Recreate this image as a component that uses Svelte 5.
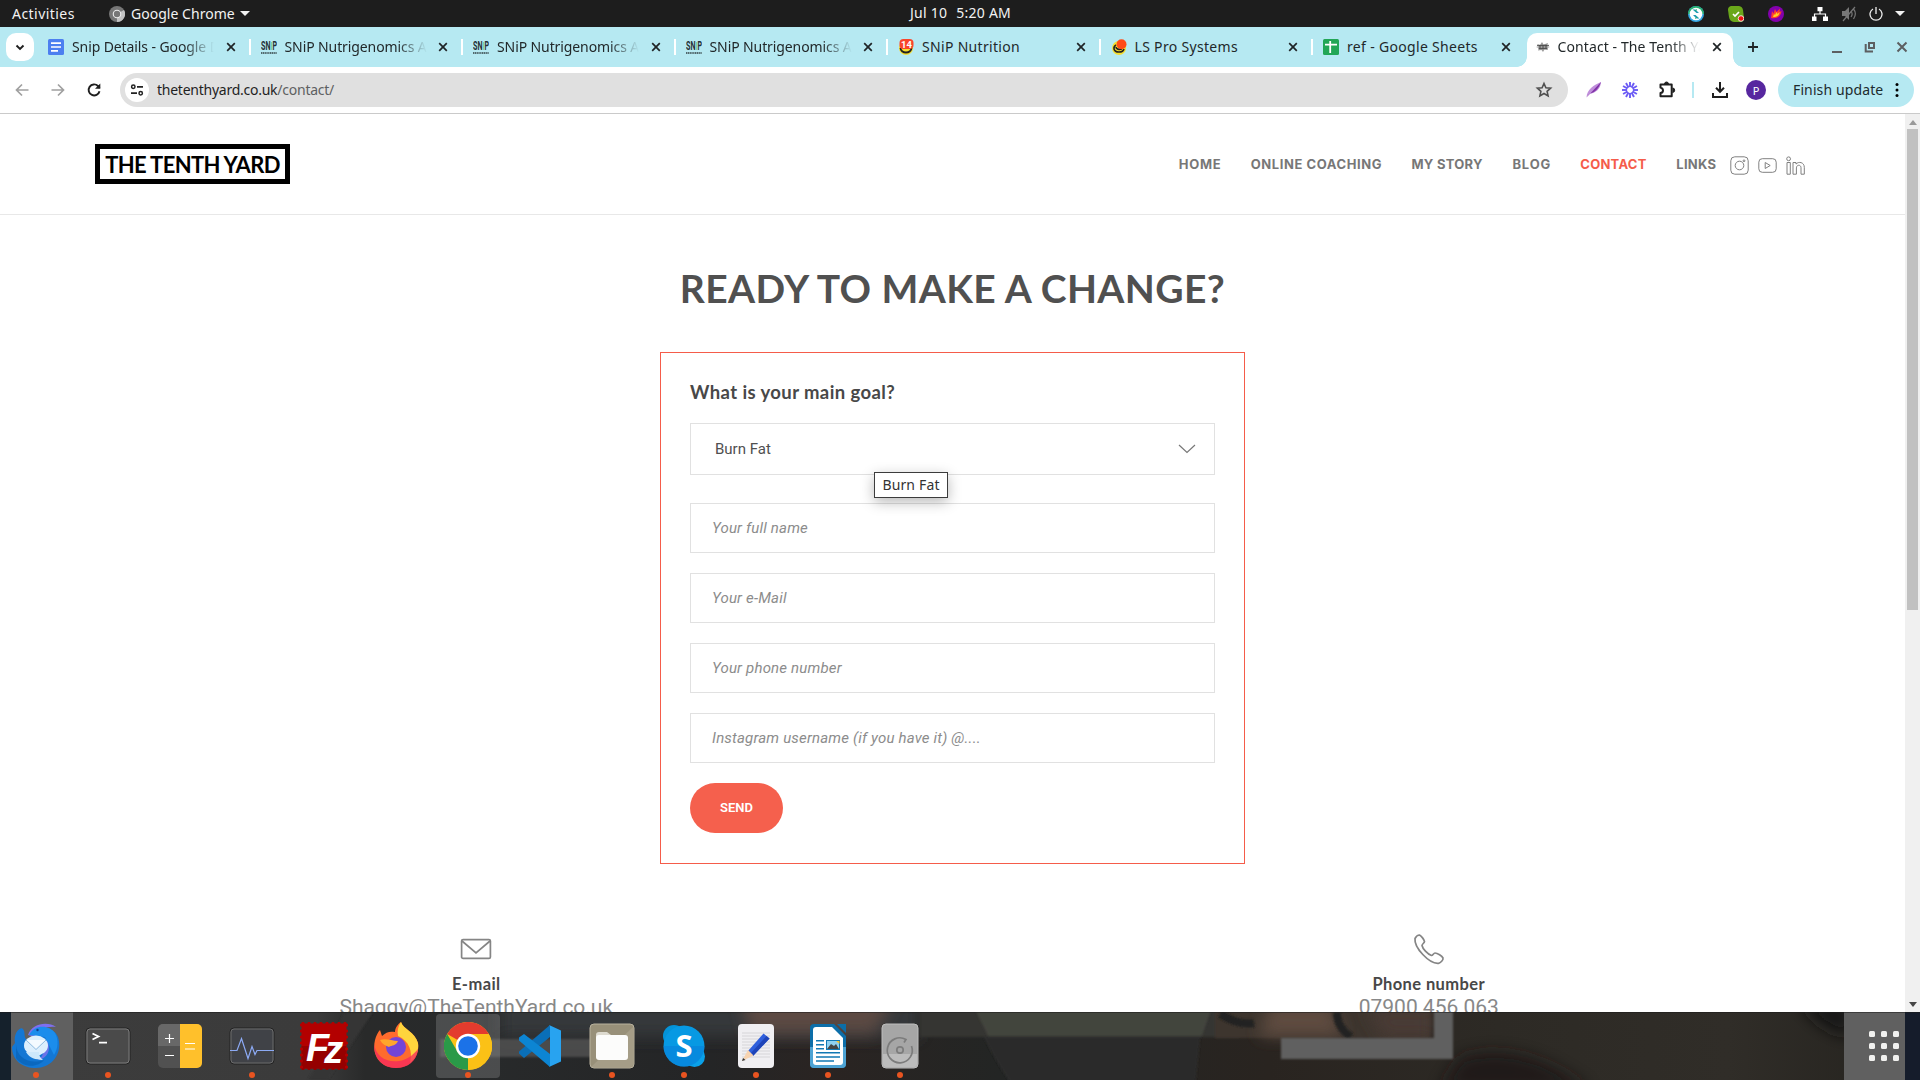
<script lang="ts">
  const tabs = [
    { icon: 'docs', title: 'Snip Details - Google Docs', sep: true },
    { icon: 'snip', title: 'SNiP Nutrigenomics Admin', sep: true },
    { icon: 'snip', title: 'SNiP Nutrigenomics Admin', sep: true },
    { icon: 'snip', title: 'SNiP Nutrigenomics Admin', sep: true },
    { icon: 'badge', title: 'SNiP Nutrition', sep: true, loose: true },
    { icon: 'dot', title: 'LS Pro Systems', sep: true, loose: true },
    { icon: 'sheets', title: 'ref - Google Sheets', sep: false, loose: true },
    { icon: 'yard', title: 'Contact - The Tenth Yard', sep: false, active: true }
  ];
  const nav = ['Home', 'Online coaching', 'My story', 'Blog', 'Contact', 'Links'];
  const fields = ['Your full name', 'Your e-Mail', 'Your phone number', 'Instagram username (if you have it) @....'];
  const apps = [
    { id: 'mail', run: true },
    { id: 'terminal', run: true },
    { id: 'calc', run: false },
    { id: 'monitor', run: true },
    { id: 'filezilla', run: false },
    { id: 'firefox', run: false },
    { id: 'chrome', run: true, active: true },
    { id: 'code', run: false },
    { id: 'files', run: true },
    { id: 'skype', run: true },
    { id: 'editor', run: true },
    { id: 'writer', run: true },
    { id: 'disks', run: true }
  ];
  const rays = Array.from({ length: 12 }, (_, i) => i * 30);
  const teeth = Array.from({ length: 8 }, (_, i) => 3 + i * 6);
</script>

{#snippet favicon(kind: string)}
  <svg class="fav" viewBox="0 0 16 16">
    {#if kind === 'docs'}
      <rect width="16" height="16" rx="1.5" fill="#4c7ff0" />
      <path d="M3 4.2h10M3 8h10M3 11.8h7" stroke="#fff" stroke-width="1.7" />
    {:else if kind === 'snip'}
      <text x="0" y="11" class="sn" textLength="9.5" lengthAdjust="spacingAndGlyphs">SN</text>
      <path d="M10.500 3v8" stroke="#7fd0a8" stroke-width="1.400" />
      <text x="11.500" y="11" class="sn" textLength="4.5" lengthAdjust="spacingAndGlyphs">P</text>
      <path d="M0 14h16" stroke="#3a4a4e" stroke-width="2" stroke-dasharray="1.3 .5" opacity=".8" />
    {:else if kind === 'badge'}
      <circle cx="8" cy="9" r="7" fill="#f5de2e" />
      <path d="M2.500 9a5.500 4.500 0 0 0 11 0" fill="none" stroke="#222" stroke-width="1.800" />
      <rect x="1.500" y="0" width="14" height="10" rx="4" fill="#f9452b" />
      <text x="8.500" y="8.500" class="num">14</text>
    {:else if kind === 'dot'}
      <circle cx="8" cy="9" r="7" fill="#f5de2e" />
      <path d="M5 6a4 4 0 0 0-2 4c1 4 9 4 10 0M5 8c0 2 3 3 6 2" fill="none" stroke="#222" stroke-width="1.6" />
      <circle cx="10.5" cy="5.2" r="5" fill="#ff4b17" />
    {:else if kind === 'sheets'}
      <rect width="16" height="16" rx="1.5" fill="#22a656" />
      <path d="M2 5.600h12M7.200 2v12" stroke="#fff" stroke-width="1.800" />
    {:else}
      <path d="M2 5l3 1 2-3 1.500 2.500L13 4l-1 3 3 1-3 1 1 2-3.500-.5L8 13l-1.500-2L3 11.500 4 9 1 8l3-1z" fill="#9b9b9b" />
      <path d="M2 6.400h12M3.500 9.600h9M5 6.400v3M8 6.400v3M11 6.400v3" stroke="#444" stroke-width=".9" />
    {/if}
  </svg>
{/snippet}

{#snippet appIcon(id: string)}
  <svg class="app" viewBox="0 0 48 48">
    {#if id === 'mail'}
      <path d="M3 21C1 12 8 4 11 7c3 4 0 8 4 11l8-2C30 5 41 4 46 15c5 15-5 31-22 31C10 46 0 38 0 25z" fill="#1377d4" />
      <path d="M16 13C20 1 36-1 44 5c-8-1-17 1-21 10z" fill="#7e6ff0" />
      <path d="M17 13C23 2 37 3 43 11c4 7 3 16-1 22l-9-18z" fill="#1b8dec" />
      <path d="M4 23c1 12 12 20 28 15-5 7-20 9-28-2z" fill="#075fb0" opacity=".6" />
      <path d="M35 19c5 8 0 18-9 19 8-5 6-15 4-19z" fill="#6974e8" />
      <ellipse cx="24" cy="23.500" rx="12" ry="10" fill="#dceffd" />
      <path d="M14 30c4 7 9 7 17 8-3-2-4-5-4-8z" fill="#cde8fb" />
      <path d="M14 18l10 9.500L34 18" fill="#f3faff" stroke="#8fbbe0" stroke-width="1" />
      <circle cx="25.500" cy="8" r="1.200" fill="#133c8c" />
    {:else if id === 'terminal'}
      <rect x="2" y="6" width="44" height="36" rx="4" fill="#4a4a4a" stroke="#232323" />
      <rect x="3" y="7" width="42" height="34" rx="3" fill="none" stroke="#7b7b7b" />
      <path d="M8.500 11.500l6 3-6 3M15 20.700h8" fill="none" stroke="#fff" stroke-width="1.800" />
    {:else if id === 'calc'}
      <rect x="2" y="2" width="44" height="44" rx="5" fill="#515151" />
      <path d="M2 24V7a5 5 0 0 1 5-5h17v22z" fill="#686868" />
      <path d="M24 2h17a5 5 0 0 1 5 5v34a5 5 0 0 1-5 5H24z" fill="#ffc02b" />
      <path d="M9 16.500h9M13.500 12v9M9 33.500h9M29 21.500h10M29 27h10" stroke="#fff" stroke-width="1.200" />
    {:else if id === 'monitor'}
      <rect x="2" y="6" width="44" height="36" rx="4" fill="#404247" stroke="#232323" />
      <rect x="3" y="7" width="42" height="34" rx="3" fill="none" stroke="#6b6b6b" />
      <path d="M2 28.500h7l4.500-12 6.500 20 4-12 3 8 2-4h17" fill="none" stroke="#8caaf5" stroke-width="1.200" />
    {:else if id === 'filezilla'}
      <rect x="1.500" y="1.500" width="45" height="45" fill="#b30000" />
      <path d="M1.500 24h45v22.500h-45z" fill="#950000" />
      {#each teeth as t}
        <circle cx={t} cy="1.500" r="1.600" fill="#b30000" />
        <circle cx={t} cy="46.500" r="1.600" fill="#950000" />
        <circle cx="1.500" cy={t} r="1.600" fill="#b30000" />
        <circle cx="46.500" cy={t} r="1.600" fill="#b30000" />
      {/each}
      <text x="6" y="39" class="fz">F<tspan dx="-5" dy="2">z</tspan></text>
    {:else if id === 'firefox'}
      <path d="M3 18c1-4 3-8 5-10l2 6c4-4 8-5 13-4 0-4 3-8 6-10 2 7 14 10 17 21 2 14-8 25-22 25S-1 35 3 18z" fill="#ff6b2d" />
      <path d="M29 0c2 7 14 10 17 21 1 7-2 15-8 20 3-12-1-22-12-27-1-5 0-10 3-14z" fill="#ffd53d" />
      <path d="M2 22c2 12 12 19 25 17 8-1 14-6 19-12-1 12-10 19-22 19C10 46 2 36 2 22z" fill="#f5265f" opacity=".75" />
      <circle cx="24" cy="25" r="10" fill="#7544d6" />
      <path d="M8 18c6-2 12 1 18 1-2 5-6 4-9 6-3-1-7-3-9-7z" fill="#ffa62b" />
    {:else if id === 'chrome'}
      <circle cx="24" cy="24" r="24" fill="#fbc116" />
      <path d="M24 24L3.200 12A24 24 0 0 1 44.800 12H24z" fill="#e33b2e" />
      <path d="M3.200 12L13.600 30 24 36 24 48A24 24 0 0 1 3.200 12z" fill="#2a9a48" />
      <path d="M34.400 30L24 48A24 24 0 0 0 44.800 12H24z" fill="#fbc116" />
      <circle cx="24" cy="24" r="12.200" fill="#fff" />
      <circle cx="24" cy="24" r="9.800" fill="#1b72e8" />
    {:else if id === 'code'}
      <path d="M34 3v12L8 36l-5-4.500v-2z" fill="#0a6fb8" />
      <path d="M3 18.500v-3L8 12l26 20v13z" fill="#0c85d3" />
      <path d="M33 3l12 5.500v31L33 45c1-.5 1-1.500 1-3V6c0-1.500 0-2.500-1-3z" fill="#28a3f0" />
    {:else if id === 'files'}
      <rect x="2" y="2" width="44" height="44" rx="4" fill="#989079" stroke="#b8b19d" />
      <path d="M3 45L45 5v37a3 3 0 0 1-3 3z" fill="#a59d87" />
      <path d="M8 13a3 3 0 0 1 3-3h8l4 3v8H8z" fill="#dddacf" />
      <rect x="8" y="13" width="32" height="25" rx="3" fill="#fcfcfb" />
    {:else if id === 'skype'}
      <circle cx="14" cy="14" r="11" fill="#0493d8" />
      <circle cx="34.500" cy="34.500" r="10.500" fill="#0aa1e9" />
      <circle cx="24" cy="24" r="20.500" fill="#0799e3" />
      <path d="M3.500 24a20.500 20.500 0 0 0 41 0z" fill="#0783dc" opacity=".65" />
      <text x="24" y="34.500" class="sk">S</text>
    {:else if id === 'editor'}
      <rect x="6" y="2" width="36" height="44" rx="4" fill="#f0eff2" />
      <path d="M10 11h28M10 14h28M10 17h28M10 20h28M10 23h28M10 26h28M10 29h28M10 32h28M10 35h28" stroke="#cfcfd2" stroke-width=".8" />
      <path d="M31.500 11.500l6 5L21 34l-5-5z" fill="#2f5fdc" />
      <path d="M34.500 14l3 2.500L21 34l-2.500-2.500z" fill="#1f44b8" />
      <path d="M16 28l5.500 5.500L10 39z" fill="#f7d3b0" />
      <path d="M11 36l2.500 2L10 39z" fill="#333" />
    {:else if id === 'writer'}
      <path d="M10 2h20l12 12v28a4 4 0 0 1-4 4H10a4 4 0 0 1-4-4V6a4 4 0 0 1 4-4z" fill="#0c6ea9" />
      <path d="M6 25h36v17a4 4 0 0 1-4 4H10a4 4 0 0 1-4-4z" fill="#4da3d4" />
      <path d="M9 8a3 3 0 0 1 3-3h16l11 11v24a3 3 0 0 1-3 3H12a3 3 0 0 1-3-3z" fill="#fff" />
      <path d="M33 2h9v9z" fill="#0c6ea9" />
      <path d="M12 18.700h8M12 22.700h8M12 26.700h8M12 30.700h24M12 35h24M12 39h18" stroke="#1278b4" stroke-width="1.600" />
      <rect x="22.500" y="18.500" width="13" height="9" fill="#8fd0f1" stroke="#1278b4" />
      <path d="M23 27l4-5 3 2 2-2 3 5z" fill="#444" />
      <path d="M32 19h3.500v3z" fill="#f4c430" />
    {:else}
      <rect x="6" y="2" width="36" height="44" rx="4" fill="#a6a6a6" stroke="#bdbdbd" />
      <path d="M7 32h34v10a3 3 0 0 1-3 3H10a3 3 0 0 1-3-3z" fill="#bcbcbc" />
      <path d="M35.500 24a12.500 12.500 0 1 1-5.500-6.500l-2 3" fill="none" stroke="#7c7c7c" stroke-width="1.700" />
      <circle cx="24" cy="28" r="3.200" fill="none" stroke="#7c7c7c" stroke-width="1.700" />
    {/if}
  </svg>
{/snippet}

<div class="screen">
  <header class="topbar">
    <span class="activities">Activities</span>
    <div class="appmenu">
      <svg width="16" height="16" viewBox="0 0 16 16">
        <circle cx="8" cy="8" r="8" fill="#777" />
        <path d="M8 8L15 4a8 8 0 0 1-7 12z" fill="#c2c2c2" />
        <circle cx="8" cy="8" r="4.300" fill="#eee" /><circle cx="8" cy="8" r="3.200" fill="#777" />
      </svg>
      <span class="appname">Google Chrome</span>
      <i class="caret"></i>
    </div>
    <div class="clock"><span>Jul 10</span><span>5:20 AM</span></div>
    <div class="tray">
      <svg class="t1" width="16" height="16" viewBox="0 0 16 16">
        <circle cx="8" cy="8" r="8" fill="#35a7e4" /><path d="M8 0a8 8 0 0 1 8 8H0a8 8 0 0 1 8-8z" fill="#27b071" />
        <circle cx="8" cy="8" r="6.300" fill="#fff" />
        <path d="M4.500 3.500h3L11 7H8.500zM11.500 12.500h-3L5 9h2.500z" fill="#1f9bb6" /><path d="M7 5l2-1.500M9 11l-2 1.500" stroke="#27b071" />
      </svg>
      <svg class="t2" width="16" height="16" viewBox="0 0 16 16">
        <path d="M3 0h8a5 5 0 0 1 4 4l1 8a4 4 0 0 1-4 4H6a6 6 0 0 1-5-5L0 4a4 4 0 0 1 3-4z" fill="#6aa71a" />
        <path d="M5 8l2 2 4-4" fill="none" stroke="#fff" stroke-width="1.700" /><circle cx="13" cy="12.500" r="2.800" fill="#e11" stroke="#fff" stroke-width=".8" />
      </svg>
      <svg class="t3" width="16" height="16" viewBox="0 0 16 16">
        <circle cx="8" cy="8" r="8" fill="#8400ad" />
        <path d="M3 12L4 5l1.500 2.500L7 3l1.500 3L12 2.500l-.5 3.500 2-1c-.5 5-4 8-10.500 7z" fill="#ff3b30" /><path d="M5 11l1-3 1 1 1.500-3 1 2 2-2c0 3-2 5-6.500 5z" fill="#ffd21f" />
      </svg>
      <svg class="t4" width="16" height="14" viewBox="0 0 16 14">
        <path d="M5.500 0h5v4.200h-5zM0 9.500h4.500V14H0zM11 9.500h5V14h-5z" fill="#fff" /><path d="M8 4v3M2.500 10V7h11v3" fill="none" stroke="#fff" stroke-width="1.200" />
      </svg>
      <svg class="t5" width="16" height="16" viewBox="0 0 16 16">
        <path d="M1 5h3l4-4v13l-4-4H1z" fill="#777" /><path d="M10 5c1.500 2 1.500 4 0 6M12.500 3c2.500 3 2 7 0 10M2 15L14 1" stroke="#777" stroke-width="1.200" fill="none" />
      </svg>
      <svg class="t6" width="14" height="14" viewBox="0 0 14 14">
        <path d="M4 2a6 6 0 1 0 6 0M7 0v7" fill="none" stroke="#eee" stroke-width="1.300" />
      </svg>
      <i class="caret"></i>
    </div>
  </header>

  <div class="tabstrip">
    <div class="tabsearch"><svg width="12" height="12" viewBox="0 0 12 12"><path d="M2.500 4.500L6 8l3.500-3.500" fill="none" stroke="#1f1f1f" stroke-width="1.900" /></svg></div>
    {#each tabs as tab}
      <div class="tab" class:active={tab.active} class:sep={tab.sep} class:loose={tab.loose}>
        {@render favicon(tab.icon)}
        <span class="title">{tab.title}</span>
        <svg class="x" width="10" height="10" viewBox="0 0 10 10"><path d="M1.200 1.200l7.600 7.600M8.800 1.200L1.200 8.800" stroke="#1f2426" stroke-width="1.700" /></svg>
      </div>
    {/each}
    <svg class="plus" width="12" height="12" viewBox="0 0 12 12"><path d="M6 1v10M1 6h10" stroke="#1f2426" stroke-width="1.800" /></svg>
    <div class="winctl">
      <svg width="12" height="12" viewBox="0 0 12 12"><path d="M1 11h10" stroke="#5c5f61" stroke-width="2" /></svg>
      <svg width="12" height="12" viewBox="0 0 12 12"><path d="M5 2h5v5H5z" fill="none" stroke="#5c5f61" stroke-width="2" /><path d="M1.700 3v7.500H9" fill="none" stroke="#5c5f61" stroke-width="2" /></svg>
      <svg width="12" height="12" viewBox="0 0 12 12"><path d="M1.500 1.500l9 9M10.500 1.500l-9 9" stroke="#5c5f61" stroke-width="2" /></svg>
    </div>
  </div>

  <div class="toolbar">
    <div class="navbtns">
      <svg width="16" height="16" viewBox="0 0 16 16"><path d="M14.500 8H3M8 2.500L2.500 8 8 13.500" fill="none" stroke="#a0a0a0" stroke-width="1.700" /></svg>
      <svg width="16" height="16" viewBox="0 0 16 16"><path d="M1.500 8H13M8 2.500L13.500 8 8 13.500" fill="none" stroke="#a0a0a0" stroke-width="1.700" /></svg>
      <svg width="16" height="16" viewBox="0 0 16 16"><path d="M13.500 9.200A5.500 5.500 0 1 1 12 4l1.700 1.800" fill="none" stroke="#1f1f1f" stroke-width="1.900" /><path d="M14.300 1.500v5.300H9z" fill="#1f1f1f" /></svg>
    </div>
    <div class="omnibox">
      <div class="site"><svg width="14" height="14" viewBox="0 0 14 14"><circle cx="3.300" cy="3.800" r="1.700" fill="none" stroke="#222" stroke-width="1.500" /><path d="M7 3.800h6M1 10.200h6" stroke="#222" stroke-width="1.700" /><circle cx="10.700" cy="10.200" r="1.700" fill="none" stroke="#222" stroke-width="1.500" /></svg></div>
      <span class="url">thetenthyard.co.uk<em>/contact/</em></span>
      <svg class="star" width="18" height="18" viewBox="0 0 18 18"><path d="M9 2.500l1.900 4.300 4.700.4-3.500 3.100 1 4.600L9 12.500l-4.100 2.400 1-4.600-3.500-3.100 4.700-.4z" fill="none" stroke="#4f4f4f" stroke-width="1.600" /></svg>
    </div>
    <div class="ext">
      <svg class="e1" width="16" height="16" viewBox="0 0 16 16"><path d="M.5 15.500C1 7 8 3 15 0c-.5 7-5 11-12 12z" fill="#c08fdb" /><path d="M.5 15.500L15 0c-3 8-6 10-12 12z" fill="#8133a8" /></svg>
      <svg class="e2" width="16" height="16" viewBox="0 0 16 16">
        {#each rays as r}<path d="M8 0v5" transform="rotate({r} 8 8)" stroke="#6c5cf5" stroke-width="1.900" />{/each}
        <circle cx="8" cy="8" r="3.500" fill="none" stroke="#6c5cf5" stroke-width="1.200" />
      </svg>
      <svg class="e3" width="18" height="18" viewBox="0 0 18 18"><path d="M2.500 3.500h11.200v11.700H2.500V12c1.800-.3 2.500-1.300 2.500-2.600S4.200 7 2.500 6.600z" fill="none" stroke="#1f1f1f" stroke-width="2" stroke-linejoin="round" /><path d="M6.500 3a2 2 0 0 1 4 0M14.500 7a2.200 2.200 0 0 1 0 4.400" fill="#1f1f1f" stroke="#1f1f1f" /></svg>
      <i class="vline"></i>
      <svg class="e4" width="16" height="16" viewBox="0 0 16 16"><path d="M8 0v9.500M4 5.800l4 4 4-4M1 11v4h14v-4" fill="none" stroke="#1f1f1f" stroke-width="2" /></svg>
      <span class="avatar">P</span>
    </div>
    <div class="update"><span>Finish update</span><svg width="4" height="16" viewBox="0 0 4 16"><circle cx="2" cy="2.500" r="1.500" /><circle cx="2" cy="8" r="1.500" /><circle cx="2" cy="13.500" r="1.500" /></svg></div>
  </div>

  <div class="viewport">
    <main class="page">
      <div class="masthead">
        <div class="logo">THE TENTH YARD</div>
        <nav>
          {#each nav as item}<a class:current={item === 'Contact'} class={item.split(' ')[0].toLowerCase()} href="#top">{item}</a>{/each}
          <div class="social">
            <svg width="19" height="19" viewBox="0 0 19 19"><rect x=".8" y=".8" width="17.400" height="17.400" rx="4" /><circle cx="9.500" cy="9.500" r="4.300" /><circle cx="14" cy="4.800" r=".9" /></svg>
            <svg width="19" height="19" viewBox="0 0 19 19"><rect x=".8" y="2.700" width="17.400" height="13.600" rx="3.500" /><path d="M7.200 6.500v6l5-3z" /></svg>
            <svg width="19" height="19" viewBox="0 0 19 19"><circle cx="2.600" cy="2.800" r="1.900" /><path d="M1 6.500h3.300v11.700H1zM7 6.500h3v1.600c2.500-3 8.300-2 8.300 3.200v6.900H15v-6.500c0-3.400-4.600-3.200-4.600.2v6.300H7z" /></svg>
          </div>
        </nav>
      </div>

      <h1>READY TO MAKE A CHANGE?</h1>

      <form class="card">
        <h2>What is your main goal?</h2>
        <div class="select">
          <span>Burn Fat</span>
          <svg width="18" height="10" viewBox="0 0 18 10"><path d="M1 1l8 7.500L17 1" fill="none" stroke="#777" stroke-width="1.200" /></svg>
          <div class="tip">Burn Fat</div>
        </div>
        {#each fields as f}<div class="field">{f}</div>{/each}
        <button type="button">SEND</button>
      </form>

      <div class="contacts">
        <div class="contact">
          <svg width="32" height="32" viewBox="0 0 32 32"><rect x="1.600" y="6.600" width="28.800" height="18.800" rx="1.500" /><path d="M2 8l14 12L30 8" /></svg>
          <strong>E-mail</strong>
          <span>Shaggy@TheTenthYard.co.uk</span>
        </div>
        <div class="contact">
          <svg width="32" height="32" viewBox="0 0 32 32"><path d="M2 5.500C3 3.500 5 2 6.500 2c2 1 4.500 4.500 5 6.500 0 1.500-2.500 2.500-2.500 4 .5 3 5.500 8.500 9.500 10 1.500 0 2-2.500 3.500-2.500 2.500 0 7 3 8 5 .5 2-2.500 5-4.500 5.300C16 31 1 14.500 2 5.500z" /></svg>
          <strong>Phone number</strong>
          <span>07900 456 063</span>
        </div>
      </div>
    </main>
    <div class="scroll"><i class="up"></i><i class="thumb"></i><i class="down"></i></div>
  </div>

  <footer class="dock">
    <svg class="wall" width="1920" height="68" viewBox="0 0 1920 68">
      <defs>
        <linearGradient id="base" x1="0" x2="1920" gradientUnits="userSpaceOnUse">
          <stop offset="0" stop-color="#3c3c3c" /><stop offset=".165" stop-color="#3b3b3b" /><stop offset=".19" stop-color="#292a2a" />
          <stop offset=".24" stop-color="#282a2b" /><stop offset=".37" stop-color="#242526" /><stop offset=".43" stop-color="#2a2422" />
          <stop offset=".52" stop-color="#232524" /><stop offset=".66" stop-color="#292420" /><stop offset=".78" stop-color="#2d2a25" />
          <stop offset=".9" stop-color="#302d28" /><stop offset="1" stop-color="#24221e" />
        </linearGradient>
        <filter id="s1" x="-20%" y="-40%" width="140%" height="180%"><feGaussianBlur stdDeviation="1.2" /></filter>
        <filter id="s2" x="-30%" y="-60%" width="160%" height="220%"><feGaussianBlur stdDeviation="8" /></filter>
      </defs>
      <rect width="1920" height="68" fill="url(#base)" />
      <path d="M500-10h420v35H500z" fill="#36393a" filter="url(#s2)" />
      <path d="M740-16h155l-20 38H750z" fill="#5b4a43" filter="url(#s2)" />
      <path d="M345 0h28l-45 68h-20z" fill="#363636" filter="url(#s1)" />
      <path d="M972 0h240l-12 27-5 50H1015q-22-29-43-77z" fill="#2c2c2a" filter="url(#s1)" />
      <path d="M920-5h320v30H920z" fill="#343633" filter="url(#s1)" />
      <path d="M974-5h238l-10 29H988z" fill="#43443d" filter="url(#s1)" />
      <path d="M1215-5h215v31h-215z" fill="#3d352f" filter="url(#s1)" />
      <path d="M1270-8h60l14 32h-85z" fill="#5f4c40" filter="url(#s2)" />
      <path d="M1220 2q20 12 34 9M1337 0q0 16 14 25" fill="none" stroke="#242321" stroke-width="8" filter="url(#s1)" />
      <path d="M1365-5h68v31h-50z" fill="#483b35" filter="url(#s2)" />
      <path d="M1460 46q60-20 130 32h-150z" fill="#1b1917" filter="url(#s2)" opacity=".8" />
      <path d="M1800-10h50v34q-30-6-50-34z" fill="#151413" filter="url(#s2)" />
      <path d="M440 27h160v18H440z" fill="#515151" filter="url(#s1)" opacity=".85" />
      <path d="M1434-4h19v51h-172V26h153z" fill="#606060" filter="url(#s1)" />
      <path d="M11-4h62v76H11zM1844-4h61v76h-61z" fill="#606060" />
      <path d="M0 0h11v68H0z" fill="#15212c" /><path d="M1905 0h15v68h-15z" fill="#151c2b" />
      <path d="M0 .5h1920" stroke="#1a1a1a" stroke-opacity=".5" />
    </svg>
    {#each apps as a}
      <div class="slot" class:focused={a.active}>
        {@render appIcon(a.id)}
        {#if a.run}<i class="run"></i>{/if}
      </div>
    {/each}
    <div class="grid">{#each teeth.concat(51) as _}<i></i>{/each}</div>
  </footer>
</div>

<style>
  :global(body) { margin: 0; background: #fff; overflow: hidden; }
  .screen { width: 1920px; height: 1080px; display: flex; flex-direction: column; font-family: "Noto Sans", "Open Sans", sans-serif; overflow: hidden; }
  .screen * { box-sizing: border-box; }
  svg { display: block; flex: none; }
  i { display: block; }
  span, a { white-space: nowrap; }

  .topbar { height: 27px; flex: none; background: #1d1d1d; color: #f2f2f2; font-size: 14px; display: grid; grid-template-columns: 97px 1fr auto 1fr; align-items: center; padding-left: 12px; position: relative; }
  .activities { letter-spacing: .45px; }
  .appmenu { display: flex; align-items: center; }
  .appname { margin: 0 5px 0 6px; letter-spacing: .03px; }
  .caret { border: 5px solid transparent; border-top: 5px solid #f2f2f2; border-bottom: 0; }
  .clock { position: absolute; left: 910px; top: 3px; display: flex; gap: 9px; letter-spacing: .25px; }
  .tray { position: absolute; right: 15px; display: flex; align-items: center; }
  .t1, .t2 { margin-right: 24px; }
  .t3 { margin-right: 28px; }
  .t4 { margin-right: 13px; }
  .t5 { margin-right: 12px; }
  .t6 { margin-right: 12px; }

  .tabstrip { height: 40px; flex: none; background: #b6e9f2; display: flex; align-items: flex-start; padding: 6px 0 0 6px; }
  .tabsearch { width: 28px; height: 28px; border-radius: 10px; background: #fff; display: flex; align-items: center; justify-content: center; margin-right: 4px; }
  .tab { width: 212.5px; height: 34px; padding: 0 15px 6px 10px; display: flex; align-items: center; position: relative; flex: none; }
  .tab.sep::after { content: ""; position: absolute; right: 0; top: 6px; width: 2px; height: 16px; background: #fff; }
  .tab.active { background: #fff; border-radius: 10px 10px 0 0; width: 206px; margin-left: 1px; padding-left: 8px; padding-right: 11px; }
  .tab.active::before, .tab.active::after { content: ""; position: absolute; bottom: 0; width: 10px; height: 10px; }
  .tab.active::before { left: -10px; background: radial-gradient(circle at 0 0, transparent 9.5px, #fff 10px); }
  .tab.active::after { right: -10px; background: radial-gradient(circle at 100% 0, transparent 9.5px, #fff 10px); }
  .fav { width: 16px; height: 16px; }
  .sn { font: 700 13px "Roboto", sans-serif; fill: #243236; }
  .num { font: 700 9.500px "Roboto", sans-serif; fill: #fff; text-anchor: middle; }
  .title { margin-left: 8px; padding-bottom: 2px; font-size: 14px; letter-spacing: -.1px; color: #22282a; width: 142px; overflow: hidden; -webkit-mask-image: linear-gradient(90deg, #000 112px, transparent 142px); mask-image: linear-gradient(90deg, #000 112px, transparent 142px); }
  .loose .title { letter-spacing: .32px; -webkit-mask-image: none; mask-image: none; }
  .active .title { letter-spacing: .1px; margin-left: 7px; }
  .x { margin-left: auto; }
  .plus { margin: 8px 0 0 14px; }
  .winctl { margin: 8px 12px 0 auto; display: flex; gap: 20.500px; }

  .toolbar { height: 47px; flex: none; border-bottom: 1px solid #cacaca; background: #fff; display: flex; align-items: center; }
  .navbtns { display: flex; gap: 20px; padding-left: 14px; width: 120px; }
  .omnibox { width: 1448px; height: 34px; border-radius: 17px; background: #e0e0e0; display: flex; align-items: center; padding: 0 15px 0 5px; }
  .site { width: 24px; height: 24px; border-radius: 50%; background: #fff; display: flex; align-items: center; justify-content: center; }
  .url { margin-left: 8px; padding-bottom: 2px; font-size: 14px; letter-spacing: -.25px; color: #1f1f1f; }
  .url em { font-style: normal; color: #5e6062; }
  .star { margin-left: auto; }
  .ext { display: flex; align-items: center; width: 210px; padding-left: 18px; }
  .e2 { margin-left: 20px; }
  .e3 { margin-left: 20px; }
  .vline { width: 2px; height: 16px; background: #b6e9f2; margin: 0 18px 0 16px; }
  .avatar { width: 20px; height: 20px; border-radius: 50%; background: #57279f; color: #fff; font-size: 11px; display: flex; align-items: center; justify-content: center; margin-left: 18px; }
  .update { width: 136px; height: 34px; border-radius: 17px; background: #b6e9f2; display: flex; align-items: center; justify-content: space-between; padding: 0 15px; font-size: 14px; letter-spacing: .12px; color: #1d2b2e; }
  .update span { padding-bottom: 2px; }

  .viewport { height: 898px; flex: none; display: flex; overflow: hidden; }
  .page { width: 1905px; height: 898px; overflow: hidden; background: #fff; }
  .masthead { height: 101px; border-bottom: 1px solid #e8e8e8; display: flex; align-items: center; justify-content: space-between; padding: 0 100px 0 95px; }
  .logo { width: 195px; height: 40px; border: 5px solid #000; color: #000; font: 700 22px/31px Lato, sans-serif; text-align: center; white-space: nowrap; letter-spacing: -.65px; }
  nav { display: flex; align-items: center; gap: 30px; }
  nav a { --ls: .25px; text-decoration: none; text-transform: uppercase; font: 700 13px/16px Inter, sans-serif; color: #777; letter-spacing: var(--ls); margin-right: calc(0px - var(--ls)); }
  nav a.home { --ls: .75px; }
  nav a.online { --ls: .57px; }
  nav a.blog { --ls: .85px; }
  nav a.current { color: #f55c4a; }
  .social { display: flex; gap: 9px; margin: 3px 0 0 -16px; }
  .social svg { fill: none; stroke: #808080; stroke-width: 1; }
  h1 { margin: 45px 0 0; height: 93px; text-align: center; font: 700 39px/56px Lato, sans-serif; letter-spacing: .4px; color: #505050; }
  .card { width: 585px; height: 512px; margin: -1px auto 0; border: 1px solid #f55c4a; padding: 0 29px; }
  h2 { margin: 23px 0 0; height: 47px; font: 700 18.500px/32px Lato, sans-serif; letter-spacing: .4px; color: #484848; }
  .select { height: 52px; border: 1px solid #e1e1e1; display: flex; align-items: center; justify-content: space-between; padding: 0 18px 0 24px; font: 400 15px Roboto, sans-serif; color: #505050; position: relative; margin-bottom: 28px; }
  .tip { position: absolute; left: 183px; top: 48px; width: 74px; height: 26px; border: 1px solid #3c3c3c; background: #fff; font: 14px/24px "Noto Sans", sans-serif; letter-spacing: .15px; text-align: center; color: #333; box-shadow: 0 4px 14px rgba(0,0,0,.28); white-space: nowrap; }
  .field { height: 50px; border: 1px solid #e1e1e1; margin-bottom: 20px; padding-left: 21px; font: italic 400 15px/48px Roboto, sans-serif; letter-spacing: .18px; color: #8c8c8c; }
  button { display: block; width: 93px; height: 50px; border: 0; border-radius: 25px; background: #f5604d; color: #fff; font: 600 13px Roboto, sans-serif; padding: 0 0 2px; }
  .contacts { display: grid; grid-template-columns: 1fr 1fr; margin-top: 69px; }
  .contact { display: flex; flex-direction: column; align-items: center; }
  .contact svg { fill: none; stroke: #858585; stroke-width: 1.700; }
  .contact strong { font: 700 16.500px/22px Lato, sans-serif; letter-spacing: .4px; color: #484848; margin-top: 8px; }
  .contact span { font: 400 21px/24px Roboto, sans-serif; color: #888; letter-spacing: -.02px; }
  .scroll { width: 15px; background: #f0f0f0; display: flex; flex-direction: column; align-items: center; }
  .up { border: 4px solid transparent; border-bottom: 5px solid #9a9a9a; border-top: 0; margin: 6px 0 4px; }
  .thumb { width: 11px; height: 481px; background: #c1c1c1; }
  .down { border: 4px solid transparent; border-top: 5px solid #444; border-bottom: 0; margin: auto 0 5px; }

  .dock { height: 68px; flex: none; position: relative; display: flex; overflow: hidden; }
  .wall { position: absolute; inset: 0; }
  .slot { width: 64px; margin: 2px 4px; height: 64px; display: flex; align-items: center; justify-content: center; position: relative; border-radius: 4px; flex: none; }
  .focused { background: rgba(160,160,160,.3); }
  .app { width: 48px; height: 48px; }
  .run { position: absolute; left: 29px; top: 58px; width: 6px; height: 6px; border-radius: 50%; background: #e95420; }
  .fz { font: italic 700 38px "Liberation Sans", sans-serif; fill: #fff; }
  .sk { font: 700 31px "Open Sans", sans-serif; fill: #fff; text-anchor: middle; }
  .grid { position: relative; display: grid; grid-template-columns: repeat(3, 6px); grid-auto-rows: 6px; gap: 6px; margin: 19px 21px 0 auto; height: 30px; }
  .grid i { background: #f1f1ef; border-radius: 1.500px; }
</style>
